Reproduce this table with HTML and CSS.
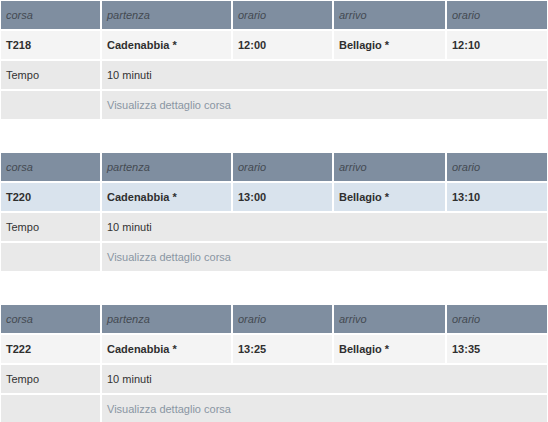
FILE: index.html
```html
<!DOCTYPE html>
<html lang="it">
<head>
<meta charset="utf-8">
<title>Orari</title>
<link rel="stylesheet" href="styles.css">
</head>
<body>
<div class="list">
  <table class="trip">
    <colgroup><col class="c1"><col class="c2"><col class="c3"><col class="c4"><col class="c5"></colgroup>
    <tr class="head"><th>corsa</th><th>partenza</th><th>orario</th><th>arrivo</th><th>orario</th></tr>
    <tr class="main"><td>T218</td><td>Cadenabbia *</td><td>12:00</td><td>Bellagio *</td><td>12:10</td></tr>
    <tr class="info"><td>Tempo</td><td colspan="4">10 minuti</td></tr>
    <tr class="info"><td></td><td colspan="4"><a class="detail" href="#">Visualizza dettaglio corsa</a></td></tr>
  </table>
  <table class="trip">
    <colgroup><col class="c1"><col class="c2"><col class="c3"><col class="c4"><col class="c5"></colgroup>
    <tr class="head"><th>corsa</th><th>partenza</th><th>orario</th><th>arrivo</th><th>orario</th></tr>
    <tr class="main hl"><td>T220</td><td>Cadenabbia *</td><td>13:00</td><td>Bellagio *</td><td>13:10</td></tr>
    <tr class="info"><td>Tempo</td><td colspan="4">10 minuti</td></tr>
    <tr class="info"><td></td><td colspan="4"><a class="detail" href="#">Visualizza dettaglio corsa</a></td></tr>
  </table>
  <table class="trip">
    <colgroup><col class="c1"><col class="c2"><col class="c3"><col class="c4"><col class="c5"></colgroup>
    <tr class="head"><th>corsa</th><th>partenza</th><th>orario</th><th>arrivo</th><th>orario</th></tr>
    <tr class="main"><td>T222</td><td>Cadenabbia *</td><td>13:25</td><td>Bellagio *</td><td>13:35</td></tr>
    <tr class="info"><td>Tempo</td><td colspan="4">10 minuti</td></tr>
    <tr class="info"><td></td><td colspan="4"><a class="detail" href="#">Visualizza dettaglio corsa</a></td></tr>
  </table>
</div>
</body>
</html>
```
FILE: styles.css
```css
html, body {
  margin: 0;
  padding: 0;
  background: #ffffff;
}
body {
  font-family: "Liberation Sans", Arial, sans-serif;
  font-size: 11px;
  color: #333333;
  overflow: hidden;
}
.list {
  display: flex;
  flex-direction: column;
  gap: 30px;
  margin: -1px 0 0 -1px;
}
.trip {
  width: 550px;
  table-layout: fixed;
  border-collapse: separate;
  border-spacing: 2px;
}
.c1 { width: 99px; }
.c2 { width: 129px; }
.c3 { width: 99px; }
.c4 { width: 111px; }
.c5 { width: 100px; }
.trip th, .trip td {
  height: 28px;
  padding: 0 5px;
  text-align: left;
  vertical-align: middle;
  white-space: nowrap;
}
.head th {
  background: #7f8ea0;
  color: #444a52;
  font-weight: normal;
  font-style: italic;
}
.main td {
  background: #f4f4f4;
  font-weight: bold;
  color: #2f2f2f;
}
.main.hl td {
  background: #d9e3ed;
}
.info td {
  background: #e9e9e9;
  color: #333333;
}
.detail {
  color: #8a96a3;
  text-decoration: none;
}
```
